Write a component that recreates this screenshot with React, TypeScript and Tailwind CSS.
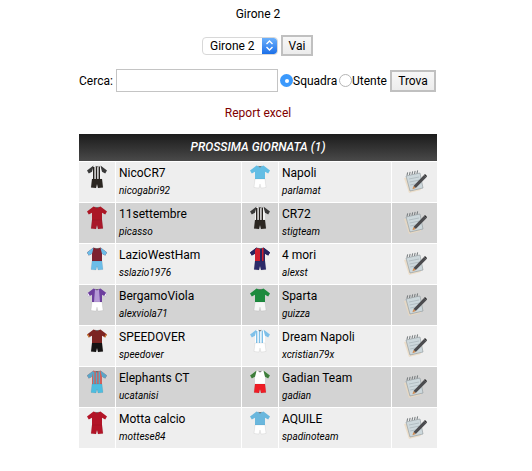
type KitProps = {
  shirt: string;
  shorts: string;
  sleeve?: string;
  stripe?: string;
  panel?: string;
  half?: string;
  cuff?: string;
};

type Team = { name: string; user: string; kit: KitProps };

const juve: KitProps = { shirt: '#f2f2f2', shorts: '#2b2621', sleeve: '#3a3a3a', stripe: '#26221f' };
const red: KitProps = { shirt: '#ab1725', shorts: '#a8182a' };

const matches: [Team, Team][] = [
  [
    { name: 'NicoCR7', user: 'nicogabri92', kit: juve },
    { name: 'Napoli', user: 'parlamat', kit: { shirt: '#63bde4', shorts: '#ffffff' } },
  ],
  [
    { name: '11settembre', user: 'picasso', kit: red },
    { name: 'CR72', user: 'stigteam', kit: juve },
  ],
  [
    { name: 'LazioWestHam', user: 'sslazio1976', kit: { shirt: '#7d2130', sleeve: '#6cbde8', shorts: '#6cbde8' } },
    { name: '4 mori', user: 'alexst', kit: { shirt: '#28245f', sleeve: '#28245f', shorts: '#2c2a68', half: '#d01f2e' } },
  ],
  [
    { name: 'BergamoViola', user: 'alexviola71', kit: { shirt: '#6d3f9e', shorts: '#ffffff', panel: '#b59ad6', cuff: '#ffffff' } },
    { name: 'Sparta', user: 'guizza', kit: { shirt: '#1d8a3e', shorts: '#f7f7f7' } },
  ],
  [
    { name: 'SPEEDOVER', user: 'speedover', kit: { shirt: '#7c2422', shorts: '#151313', cuff: '#d98a3a' } },
    { name: 'Dream Napoli', user: 'xcristian79x', kit: { shirt: '#ffffff', sleeve: '#7fc0e8', shorts: '#ffffff', stripe: '#7fc0e8' } },
  ],
  [
    { name: 'Elephants CT', user: 'ucatanisi', kit: { shirt: '#d2605a', sleeve: '#5aa6c8', shorts: '#4dbde0', stripe: '#4fa9c9' } },
    { name: 'Gadian Team', user: 'gadian', kit: { shirt: '#ffffff', sleeve: '#3d7d3a', shorts: '#ef1c25' } },
  ],
  [
    { name: 'Motta calcio', user: 'mottese84', kit: { ...red, shirt: '#b31427', shorts: '#b31427' } },
    { name: 'AQUILE', user: 'spadinoteam', kit: { shirt: '#6ab7dd', shorts: '#ffffff' } },
  ],
];

const Kit = ({ shirt, shorts, sleeve, stripe, panel, half, cuff }: KitProps) => (
  <svg width="20" height="24" viewBox="0 0 20 24" className="block">
    <path d="M6.5 0.5 L0 5.5 L1.8 8.5 L5 6.8 L5 14 L15 14 L15 6.8 L18.2 8.5 L20 5.5 L13.5 0.5 L10 1.8 Z" fill={shirt} />
    {sleeve && <path d="M6.5 0.5 L0 5.5 L1.8 8.5 L5 6.8 L6 3 Z M13.5 0.5 L20 5.5 L18.2 8.5 L15 6.8 L14 3 Z" fill={sleeve} />}
    {stripe && (
      <path d="M6 2h1.4v12H6z M8.8 1.5h1.4v12.5H8.8z M11.6 1.5h1.4v12.5h-1.4z" fill={stripe} />
    )}
    {panel && <path d="M8 1.5 L12 1.5 L13 14 L7 14 Z" fill={panel} />}
    {half && <path d="M6.5 1 L10 1.8 L10 14 L5 14 L5 3 Z M12 1 L13.5 1 L13.5 14 L12 14 Z" fill={half} />}
    {cuff && <path d="M0 5.5 L1.8 8.5 L2.8 8 L1 5 Z M20 5.5 L18.2 8.5 L17.2 8 L19 5 Z" fill={cuff} />}
    <path d="M8 0.8 L10 2.4 L12 0.8 L10 1.6 Z" fill="#4a4a4a" />
    <path d="M5 14 L15 14 L16 22.5 L11 23 L10 19 L9 23 L4 22.5 Z" fill={shorts} stroke="#00000022" strokeWidth="0.5" />
  </svg>
);

const NoteIcon = () => (
  <svg width="24" height="24" viewBox="0 0 24 24" className="block">
    <path d="M1 8 L13 5 L18 20 L6 23 Z" fill="#ecd9bf" opacity="0.75" />
    <path d="M3 6 L17 3 L20 18 L7 21 Z" fill="#cdd8dc" stroke="#8d9598" strokeWidth="0.6" />
    <path d="M6 9 L16 7 M6.6 12 L16.6 10 M7.2 15 L14 13.6" stroke="#a7b3b8" strokeWidth="0.7" />
    <path d="M4 5.4 L4.6 2.4 M6.5 4.9 L7.1 1.9 M9 4.4 L9.6 1.4 M11.5 3.9 L12.1 0.9 M14 3.4 L14.6 0.4" stroke="#6f7578" strokeWidth="1" />
    <path d="M10.5 16 L21 5 L23.4 7.2 L12.8 18 Z" fill="#4b4b4e" />
    <path d="M10.5 16 L9.4 19.2 L12.8 18 Z" fill="#cf8b52" />
    <path d="M21 5 L22 4 L24 6 L23.4 7.2 Z" fill="#2b2b2d" />
  </svg>
);

const TeamCells = ({ team, cellBg }: { team: Team; cellBg: string }) => (
  <>
    <div className={`${cellBg} flex justify-center pt-[3px]`}>
      <Kit {...team.kit} />
    </div>
    <div className={`${cellBg} pl-[3px] pt-[2px]`}>
      <div className="text-[12px] leading-[18px] text-black">{team.name}</div>
      <div className="mt-[1px] text-[10px] italic leading-[16px] text-black">{team.user}</div>
    </div>
  </>
);

const Radio = ({ checked }: { checked?: boolean }) =>
  checked ? (
    <span className="flex h-[13px] w-[13px] shrink-0 items-center justify-center rounded-full bg-[#3b99fc]">
      <span className="h-[4px] w-[4px] rounded-full bg-white" />
    </span>
  ) : (
    <span className="block h-[13px] w-[13px] shrink-0 rounded-full border border-[#b5b5b5] bg-white" />
  );

const grayButton =
  'border-2 border-[#c0c0c0] bg-gradient-to-b from-[#f7f7f7] to-[#ececec] text-[12px] text-black flex items-center justify-center';

export default function App() {
  return (
    <div className="min-h-[471px] w-[516px] bg-white font-['Roboto',sans-serif] text-[12px] text-black">
      <div className="flex h-[29px] items-end justify-center pb-[7px] leading-[15px]">Girone 2</div>

      <div className="ml-[202px] mt-[6px] flex h-[21px] items-center">
        <div className="flex h-[18px] w-[76px] overflow-hidden rounded-[4px] border border-[#d8d8d8] bg-white">
          <span className="flex-1 pl-[7px] leading-[16px]">Girone 2</span>
          <span className="flex w-[15px] items-center justify-center rounded-r-[3px] bg-gradient-to-b from-[#6bb0fb] to-[#1a6fe8]">
            <svg width="9" height="13" viewBox="0 0 9 13" fill="none" stroke="#fff" strokeWidth="1.4">
              <path d="M1.5 5 L4.5 2 L7.5 5 M1.5 8 L4.5 11 L7.5 8" />
            </svg>
          </span>
        </div>
        <button type="button" className={`${grayButton} ml-[3px] h-[21px] w-[32px]`}>
          Vai
        </button>
      </div>

      <div className="ml-[79px] mt-[13px] flex h-[23px] items-center">
        <span className="w-[37px]">Cerca:</span>
        <input type="text" readOnly className="h-[23px] w-[162px] border border-[#c4c4c4] bg-white outline-none" />
        <span className="ml-[2px]">
          <Radio checked />
        </span>
        <span className="w-[46px]">Squadra</span>
        <Radio />
        <span className="w-[38px]">Utente</span>
        <button type="button" className={`${grayButton} h-[22px] w-[46px]`}>
          Trova
        </button>
      </div>

      <div className="mt-[14px] text-center leading-[15px] text-[#800000]">Report excel</div>

      <div className="ml-[79px] mt-[13px] w-[358px]">
        <div className="flex h-[27px] items-center justify-center bg-gradient-to-b from-[#1c1c1c] to-[#4a4a4a] pb-[2px] text-[12px] font-medium italic text-white">
          PROSSIMA GIORNATA (1)
        </div>
        <div className="mt-px grid grid-cols-[36px_125px_36px_112px_45px] gap-px">
          {matches.map(([home, away], i) => {
            const cellBg = i % 2 === 0 ? 'bg-[#eeeeee]' : 'bg-[#d3d3d3]';
            return (
              <div key={home.user} className="contents">
                <TeamCells team={home} cellBg={cellBg} />
                <TeamCells team={away} cellBg={cellBg} />
                <div className={`${cellBg} flex h-[40px] items-center justify-center`}>
                  <NoteIcon />
                </div>
              </div>
            );
          })}
        </div>
      </div>
    </div>
  );
}
